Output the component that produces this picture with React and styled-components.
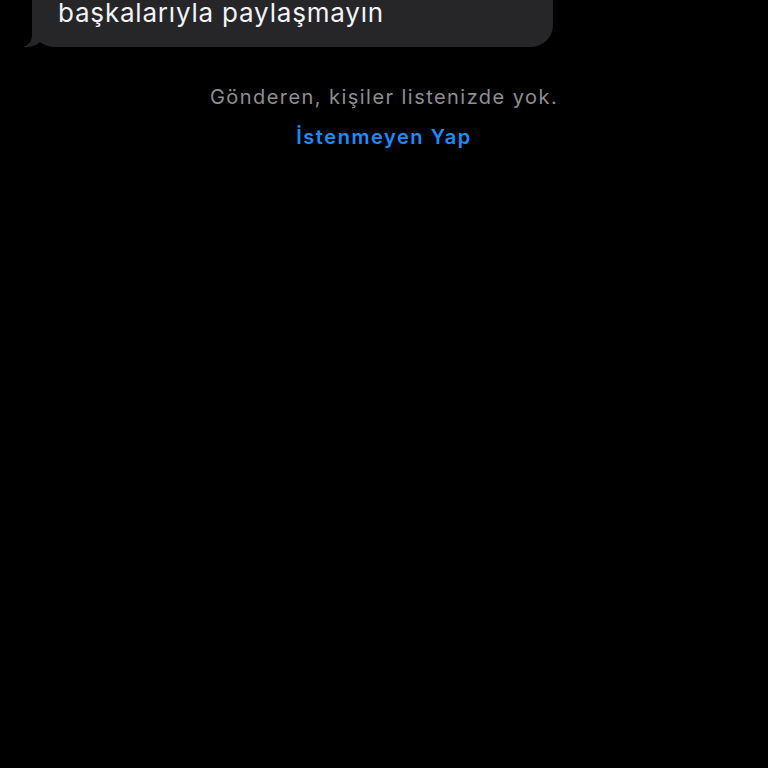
import React from "react";
import styled, { createGlobalStyle } from "styled-components";

const Global = createGlobalStyle`
  html, body {
    margin: 0;
    padding: 0;
    background: #000;
  }
  body {
    font-family: Inter, "Liberation Sans", sans-serif;
    -webkit-font-smoothing: antialiased;
  }
`;

const Screen = styled.div`
  width: 768px;
  height: 768px;
  background: #000;
  overflow: hidden;
`;

const Thread = styled.div`
  display: flex;
  flex-direction: column;
`;

const BubbleRow = styled.div`
  display: flex;
  padding-left: 32px;
  margin-top: -11px;
`;

const Bubble = styled.div`
  position: relative;
  width: 521px;
  box-sizing: border-box;
  padding: 8px 24px 18px 26px;
  background: #262629;
  border-radius: 0 0 22px 22px;
  color: #f2f2f7;
  font-size: 26px;
  line-height: 32px;
  letter-spacing: 0.8px;
`;

const Tail = styled.svg`
  position: absolute;
  left: -10px;
  bottom: 0;
  width: 30px;
  height: 22px;
`;

const Notice = styled.div`
  display: flex;
  flex-direction: column;
  align-items: center;
  margin-top: 38px;
  gap: 16px;
`;

const Info = styled.div`
  color: #8e8e93;
  font-size: 20px;
  line-height: 24px;
  letter-spacing: 1.45px;
`;

const Action = styled.button`
  background: none;
  border: 0;
  padding: 0;
  color: #1a8cff;
  font-family: inherit;
  font-size: 20px;
  line-height: 24px;
  font-weight: 600;
  letter-spacing: 1.55px;
`;

export default function App() {
  return (
    <Screen>
      <Global />
      <Thread>
        <BubbleRow>
          <Bubble>
            <Tail viewBox="0 0 30 22">
              <path d="M10 0 L10 10 C10 16 6 21 0.5 22 C8 22.5 14 20.5 18 17 L30 17 L30 0 Z" fill="#262629" />
            </Tail>
            başkalarıyla paylaşmayın
          </Bubble>
        </BubbleRow>
        <Notice>
          <Info>Gönderen, kişiler listenizde yok.</Info>
          <Action>İstenmeyen Yap</Action>
        </Notice>
      </Thread>
    </Screen>
  );
}
